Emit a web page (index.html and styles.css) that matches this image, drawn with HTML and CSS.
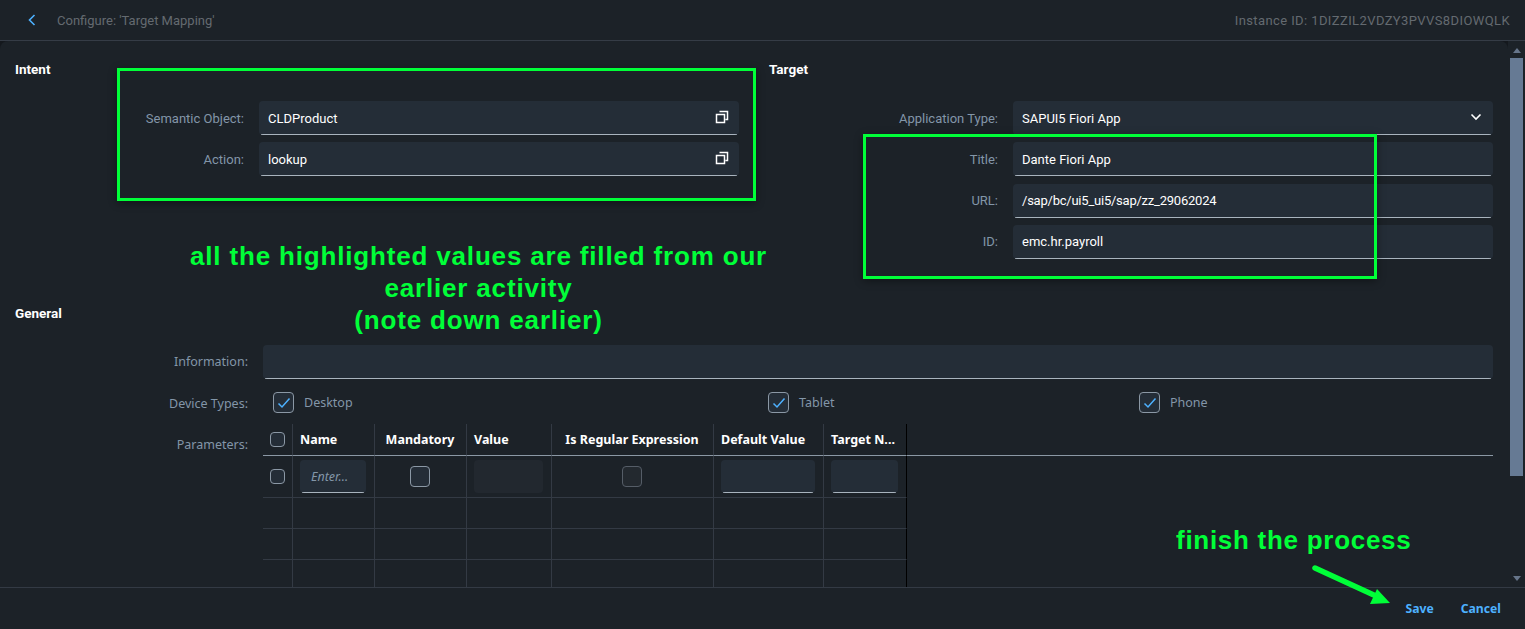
FILE: index.html
```html
<!DOCTYPE html>
<html>
<head>
<meta name="viewport" content="width=device-width, initial-scale=1">
<title>Configure: 'Target Mapping'</title>
<link rel="stylesheet" href="styles.css">
</head>
<body>

<div class="page">
  <header class="topbar">
    <svg class="back-icon" width="8" height="12" viewBox="0 0 8 12"><path d="M6.500 1 1.500 6l5 5" fill="none" stroke="#4db1ff" stroke-width="1.600"/></svg>
    <span class="topbar-title">Configure: 'Target Mapping'</span>
    <span class="topbar-id">Instance ID: 1DIZZIL2VDZY3PVVS8DIOWQLK</span>
  </header>

  <main class="content">
    <div class="form-area">
      <div class="top-cols">
        <section class="col-intent">
          <h3 class="section-title">Intent</h3>
          <div class="fields">
            <div class="field">
              <label>Semantic Object:</label>
              <div class="input">CLDProduct
                <svg class="copy-icon" width="14" height="14" viewBox="0 0 14 14"><path d="M4.500 1.500h8v8h-2M1.500 4.500h8v8h-8z" fill="none" stroke="#fff" stroke-width="1.500"/></svg>
              </div>
            </div>
            <div class="field">
              <label>Action:</label>
              <div class="input">lookup
                <svg class="copy-icon" width="14" height="14" viewBox="0 0 14 14"><path d="M4.500 1.500h8v8h-2M1.500 4.500h8v8h-8z" fill="none" stroke="#fff" stroke-width="1.500"/></svg>
              </div>
            </div>
          </div>
        </section>
        <section class="col-target">
          <h3 class="section-title">Target</h3>
          <div class="fields">
            <div class="field">
              <label>Application Type:</label>
              <div class="input">SAPUI5 Fiori App
                <svg class="chevron-icon" width="12" height="8" viewBox="0 0 12 8"><path d="M1.500 1.500 6 6l4.500-4.500" fill="none" stroke="#fff" stroke-width="1.600"/></svg>
              </div>
            </div>
            <div class="field">
              <label>Title:</label>
              <div class="input">Dante Fiori App</div>
            </div>
            <div class="field">
              <label>URL:</label>
              <div class="input input-url">/sap/bc/ui5_ui5/sap/zz_29062024</div>
            </div>
            <div class="field">
              <label>ID:</label>
              <div class="input">emc.hr.payroll</div>
            </div>
          </div>
        </section>
      </div>

      <section class="general">
        <h3 class="section-title">General</h3>
        <div class="gen-row gen-info">
          <label>Information:</label>
          <div class="input"></div>
        </div>
        <div class="gen-row gen-devices">
          <label>Device Types:</label>
          <div class="devices">
            <span class="device device-desktop"><span class="check"><svg width="14" height="12" viewBox="0 0 14 12"><path d="M1.500 6.500 5 10l7.500-8.500" fill="none" stroke="#4db1ff" stroke-width="1.500"/></svg></span>Desktop</span>
            <span class="device device-tablet"><span class="check"><svg width="14" height="12" viewBox="0 0 14 12"><path d="M1.500 6.500 5 10l7.500-8.500" fill="none" stroke="#4db1ff" stroke-width="1.500"/></svg></span>Tablet</span>
            <span class="device device-phone"><span class="check"><svg width="14" height="12" viewBox="0 0 14 12"><path d="M1.500 6.500 5 10l7.500-8.500" fill="none" stroke="#4db1ff" stroke-width="1.500"/></svg></span>Phone</span>
          </div>
        </div>
        <div class="gen-row gen-params">
          <label>Parameters:</label>
          <table class="params">
            <colgroup>
              <col class="c-sel"><col class="c-name"><col class="c-mand"><col class="c-value">
              <col class="c-regex"><col class="c-default"><col class="c-target"><col>
            </colgroup>
            <thead>
              <tr>
                <th class="sel"><span class="box-small"></span></th>
                <th>Name</th>
                <th class="center">Mandatory</th>
                <th>Value</th>
                <th class="center">Is Regular Expression</th>
                <th>Default Value</th>
                <th class="last">Target N...</th>
                <th class="rest"></th>
              </tr>
            </thead>
            <tbody>
              <tr class="row-input">
                <td class="sel"><span class="box-small"></span></td>
                <td><div class="cell-input placeholder">Enter...</div></td>
                <td class="center"><span class="box-big"></span></td>
                <td><div class="cell-input disabled"></div></td>
                <td class="center"><span class="box-big box-off"></span></td>
                <td><div class="cell-input"></div></td>
                <td class="last"><div class="cell-input"></div></td>
                <td class="rest"></td>
              </tr>
              <tr><td></td><td></td><td></td><td></td><td></td><td></td><td class="last"></td><td class="rest"></td></tr>
              <tr><td></td><td></td><td></td><td></td><td></td><td></td><td class="last"></td><td class="rest"></td></tr>
              <tr><td></td><td></td><td></td><td></td><td></td><td></td><td class="last"></td><td class="rest"></td></tr>
            </tbody>
          </table>
        </div>
      </section>
    </div>

    <div class="scrollbar">
      <span class="arrow-up"></span>
      <span class="thumb"></span>
      <span class="arrow-down"></span>
    </div>
  </main>

  <footer class="footer">
    <button class="link-btn">Save</button>
    <button class="link-btn">Cancel</button>
  </footer>
</div>

<!-- annotations drawn on top of the screenshot -->
<div class="mark mark-intent"></div>
<div class="mark mark-target"></div>
<p class="note note-main">all the highlighted values are filled from our<br>earlier activity<br>(note down earlier)</p>
<p class="note note-finish">finish the process</p>
<svg class="note-arrow" width="90" height="46" viewBox="0 0 90 46">
  <path d="M5 3 66 31" stroke="#00ff38" stroke-width="5.500" stroke-linecap="round"/>
  <path d="M80 38 67 24 60 39z" fill="#00ff38"/>
</svg>

</body>
</html>
```

FILE: styles.css
```css
* {
  box-sizing: border-box;
}

html, body {
  height: 100%;
  margin: 0;
  overflow: hidden;
}

body {
  background: #1c2228;
  color: #fff;
  font-family: "Noto Sans", Arial, sans-serif;
  font-size: 12.500px;
}

.page {
  display: flex;
  flex-direction: column;
  height: 100%;
}

/* Top bar */
.topbar {
  display: flex;
  align-items: center;
  height: 41px;
  padding: 0 15px 0 28px;
  border-bottom: 1px solid #353c46;
  color: #646a70;
  font-family: Roboto, Arial, sans-serif;
  font-size: 13px;
  flex: none;
}

.back-icon {
  margin-right: 21px;
}

.topbar-id {
  margin-left: auto;
  letter-spacing: 0.400px;
}

/* Main area */
.content {
  display: flex;
  flex: 1;
  min-height: 0;
  overflow: hidden;
  background: #14181d;
}

.form-area {
  flex: 1;
  min-width: 0;
  overflow: hidden;
  border-radius: 8px 8px 0 0;
  background: #1c2228;
}

.top-cols {
  display: grid;
  grid-template-columns: 754px 1fr;
  font-family: Roboto, Arial, sans-serif;
  font-size: 13px;
}

.col-intent {
  padding-left: 15px;
}

.col-target {
  padding-left: 15px;
}

.section-title {
  margin: 0;
  font-size: 13.500px;
  font-weight: 700;
  line-height: 18px;
}

.col-intent .section-title,
.col-target .section-title {
  padding-top: 19px;
}

.fields {
  display: flex;
  flex-direction: column;
  gap: 7.300px;
  margin-top: 23px;
  padding-right: 15px;
}

.field {
  display: flex;
  align-items: center;
}

.field label,
.gen-row label {
  color: #8396a8;
  text-align: right;
}

.field label {
  width: 229px;
  margin-right: 15px;
}

.input {
  position: relative;
  display: flex;
  align-items: center;
  flex: 1;
  height: 34px;
  padding: 0 9px;
  border-radius: 4px;
  background: #242d37 linear-gradient(#a9b4be, #a9b4be) bottom center / calc(100% - 4px) 1px no-repeat;
}

.input-url {
  letter-spacing: -0.230px;
}

.copy-icon {
  position: absolute;
  right: 10px;
  top: 9px;
}

.chevron-icon {
  position: absolute;
  right: 11px;
  top: 12px;
}

/* General */
.general {
  padding-top: 45px;
}

.general .section-title {
  padding-left: 15px;
  font-family: Roboto, Arial, sans-serif;
}

.gen-row {
  display: flex;
  padding-right: 15px;
}

.gen-row label {
  width: 248px;
  margin-right: 15px;
  flex: none;
}

.gen-info {
  align-items: center;
  margin-top: 23px;
}

.gen-devices {
  align-items: center;
  height: 45px;
  padding-top: 4px;
}

.devices {
  position: relative;
  flex: 1;
  height: 22px;
}

.device {
  position: absolute;
  top: 0;
  display: flex;
  align-items: center;
  height: 21px;
  color: #8396a8;
}

.device-desktop { left: 10px; }
.device-tablet { left: 505px; }
.device-phone { left: 876px; }

.check {
  display: flex;
  align-items: center;
  justify-content: center;
  width: 21px;
  height: 21px;
  margin-right: 10px;
  border: 1px solid #8b98a5;
  border-radius: 4px;
  background: #242d37;
}

/* Parameters table */
.gen-params {
  align-items: flex-start;
}

.gen-params label {
  padding-top: 12px;
}

.params {
  flex: 1;
  table-layout: fixed;
  border-collapse: separate;
  border-spacing: 0;
}

.c-sel { width: 30px; }
.c-name { width: 82px; }
.c-mand { width: 92px; }
.c-value { width: 85px; }
.c-regex { width: 162px; }
.c-default { width: 110px; }
.c-target { width: 83px; }

.params th,
.params td {
  padding: 0 8px 0 7px;
  border-right: 1px solid #333a44;
  border-bottom: 1px solid #333a44;
}

.params th {
  height: 32px;
  border-bottom-color: #8b98a5;
  font-weight: 700;
  text-align: left;
  white-space: nowrap;
}

.params td {
  height: 31px;
}

.params .row-input td {
  height: 42px;
}

.params th.center,
.params td.center {
  text-align: center;
}

.params .last {
  border-right: 1px solid #000;
}

.params .rest {
  border-right: none;
}

.params td.rest {
  border-bottom: none;
}

.params .sel {
  padding: 0 0 0 7px;
}

.box-small {
  display: block;
  width: 15px;
  height: 15px;
  border: 1px solid #8b98a5;
  border-radius: 4px;
  background: #242d37;
}

.box-big {
  display: inline-block;
  width: 20px;
  height: 21px;
  border: 1px solid #8b98a5;
  border-radius: 4px;
  background: #242d37;
  vertical-align: middle;
}

.box-off {
  border-color: #555d67;
  background: #23292f;
}

.cell-input {
  height: 33px;
  border-radius: 4px;
  background: #242d37 linear-gradient(#a9b4be, #a9b4be) bottom center / calc(100% - 4px) 1px no-repeat;
}

.cell-input.disabled {
  background: #22282f;
}

.placeholder {
  padding: 0 11px;
  color: #8396a8;
  font-style: italic;
  line-height: 33px;
}

/* Scrollbar */
.scrollbar {
  display: flex;
  flex-direction: column;
  align-items: center;
  flex: none;
  width: 17px;
  padding: 7px 2px 0 2px;
  background: #1c2228;
}

.arrow-up,
.arrow-down {
  flex: none;
  width: 0;
  height: 0;
  border-left: 4px solid transparent;
  border-right: 4px solid transparent;
}

.arrow-up {
  border-bottom: 5px solid #66758a;
}

.arrow-down {
  margin-top: 100px;
  border-top: 5px solid #66758a;
}

.thumb {
  flex: none;
  width: 13px;
  height: 418px;
  margin-top: 5px;
  background: #667a94;
}

/* Footer */
.footer {
  display: flex;
  justify-content: flex-end;
  align-items: center;
  gap: 27px;
  height: 42px;
  padding: 0 24px 0 0;
  border-top: 1px solid #333a44;
  flex: none;
}

.link-btn {
  padding: 0;
  border: none;
  background: none;
  color: #4db1ff;
  font: 700 12.200px "Noto Sans", Arial, sans-serif;
}

/* Green annotations */
.mark {
  position: absolute;
  border: 3px solid #00ff38;
  box-shadow: 0 2px 8px rgba(0, 0, 0, 0.4);
}

.mark-intent {
  left: 117px;
  top: 68px;
  width: 639px;
  height: 133px;
}

.mark-target {
  left: 863px;
  top: 134px;
  width: 514px;
  height: 145px;
}

.note {
  position: absolute;
  margin: 0;
  color: #00ff38;
  font-family: "Liberation Sans", Arial, sans-serif;
  font-size: 26px;
  font-weight: 700;
  letter-spacing: 0.830px;
  line-height: 32px;
  text-align: center;
  white-space: nowrap;
}

.note-main {
  left: 190px;
  top: 240px;
  width: 577px;
}

.note-finish {
  left: 1176px;
  top: 524px;
  letter-spacing: 0.720px;
}

.note-arrow {
  position: absolute;
  left: 1310px;
  top: 565px;
}
```
